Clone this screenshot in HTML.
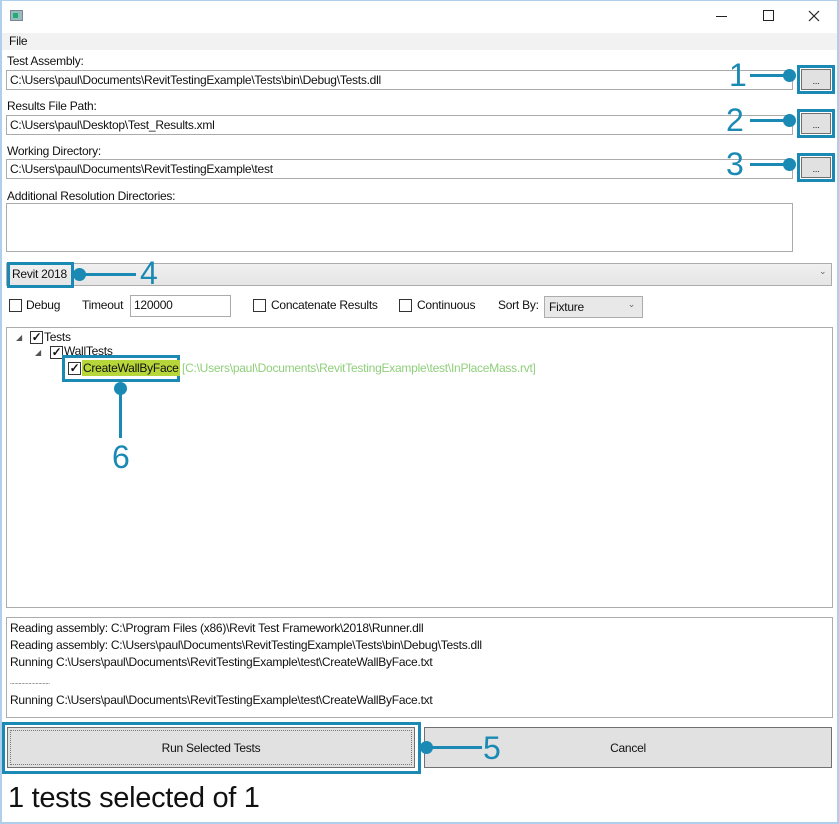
<!DOCTYPE html>
<html><head><meta charset="utf-8"><style>
*{margin:0;padding:0;box-sizing:border-box}
body{width:839px;height:824px;background:#fff;position:relative;overflow:hidden;font-family:"Liberation Sans",sans-serif;font-size:12px;color:#111;letter-spacing:-0.25px}
.a{position:absolute;white-space:nowrap}
.tb{position:absolute;border:1px solid #ababab;background:#fff;padding:2px 3px;line-height:14px}
.btn{position:absolute;border:1px solid #707070;background:#e1e1e1;text-align:center}
.hl{position:absolute;border:3px solid #1a8ab5}
.num{position:absolute;color:#1a8ab5;font-size:32px;line-height:34px;letter-spacing:0;font-family:"Liberation Sans",sans-serif}
.ln{position:absolute;background:#1a8ab5;height:3px}
.dot{position:absolute;width:13px;height:13px;border-radius:50%;background:#1a8ab5}
.cb{position:absolute;width:13px;height:13px;border:1px solid #333;background:#fff}
.ck{position:absolute;width:13px;height:13px;border:1px solid #333;background:#fff;font-size:12px;line-height:11px;text-align:center;font-weight:bold}
</style></head><body>
<div class="a" style="left:0;top:0;width:2px;height:824px;background:#aed0ec"></div>
<div class="a" style="right:0;top:0;width:2px;height:824px;background:#aed0ec"></div>
<div class="a" style="left:0;bottom:0;width:839px;height:2px;background:#aed0ec"></div>
<div class="a" style="left:0;top:0;width:839px;height:1px;background:#aed0ec"></div>
<div class="a" style="left:10px;top:10px;width:13px;height:11px;background:#9bb;border:1px solid #789"><div style="position:absolute;left:2px;top:2px;width:5px;height:5px;background:#2a7"></div></div>
<div class="a" style="left:716px;top:16px;width:11px;height:1px;background:#222"></div>
<div class="a" style="left:763px;top:10px;width:11px;height:11px;border:1px solid #222"></div>
<svg class="a" style="left:808px;top:10px" width="12" height="12"><path d="M1 1L11 11M11 1L1 11" stroke="#222" stroke-width="1.2"/></svg>
<div class="a" style="left:2px;top:33px;width:835px;height:17px;background:#f2f2f2"></div>
<div class="a" style="left:9px;top:34px">File</div>

<div class="a" style="left:7px;top:54px">Test Assembly:</div>
<div class="tb" style="left:6px;top:70px;width:787px;height:20px">C:\Users\paul\Documents\RevitTestingExample\Tests\bin\Debug\Tests.dll</div>
<div class="a" style="left:7px;top:99px">Results File Path:</div>
<div class="tb" style="left:6px;top:115px;width:787px;height:20px">C:\Users\paul\Desktop\Test_Results.xml</div>
<div class="a" style="left:7px;top:144px">Working Directory:</div>
<div class="tb" style="left:6px;top:159px;width:787px;height:20px">C:\Users\paul\Documents\RevitTestingExample\test</div>
<div class="a" style="left:7px;top:189px">Additional Resolution Directories:</div>
<div class="tb" style="left:6px;top:203px;width:787px;height:49px"></div>

<div class="hl" style="left:797px;top:65px;width:38px;height:29px"></div>
<div class="btn" style="left:801px;top:69px;width:30px;height:21px;font-size:9px;line-height:22px">...</div>
<div class="hl" style="left:797px;top:109px;width:38px;height:29px"></div>
<div class="btn" style="left:801px;top:113px;width:30px;height:21px;font-size:9px;line-height:22px">...</div>
<div class="hl" style="left:797px;top:153px;width:38px;height:29px"></div>
<div class="btn" style="left:801px;top:157px;width:30px;height:21px;font-size:9px;line-height:22px">...</div>
<div class="num" style="left:729px;top:58px">1</div><div class="ln" style="left:750px;top:74px;width:40px"></div><div class="dot" style="left:783px;top:69px"></div>
<div class="num" style="left:726px;top:103px">2</div><div class="ln" style="left:750px;top:119px;width:40px"></div><div class="dot" style="left:783px;top:114px"></div>
<div class="num" style="left:726px;top:147px">3</div><div class="ln" style="left:750px;top:163px;width:40px"></div><div class="dot" style="left:783px;top:158px"></div>

<div class="a" style="left:6px;top:263px;width:826px;height:23px;border:1px solid #acacac;background:linear-gradient(#f0f0f0,#e5e5e5)"></div>
<div class="a" style="left:819px;top:266px;font-size:9px;color:#666">⌄</div>
<div class="hl" style="left:7px;top:262px;width:67px;height:26px"></div>
<div class="a" style="left:12px;top:267px">Revit 2018</div>
<div class="dot" style="left:73px;top:268px"></div><div class="ln" style="left:80px;top:273px;width:56px"></div>
<div class="num" style="left:140px;top:256px">4</div>

<div class="cb" style="left:9px;top:299px"></div><div class="a" style="left:26px;top:298px">Debug</div>
<div class="a" style="left:82px;top:298px">Timeout</div>
<div class="tb" style="left:130px;top:295px;width:101px;height:22px">120000</div>
<div class="cb" style="left:253px;top:299px"></div><div class="a" style="left:271px;top:298px">Concatenate Results</div>
<div class="cb" style="left:399px;top:299px"></div><div class="a" style="left:417px;top:298px">Continuous</div>
<div class="a" style="left:498px;top:298px">Sort By:</div>
<div class="a" style="left:544px;top:296px;width:99px;height:22px;border:1px solid #acacac;background:#e8e8e8;padding:3px 4px">Fixture<span style="position:absolute;right:7px;top:2px;font-size:9px;color:#666">⌄</span></div>

<div class="a" style="left:6px;top:327px;width:827px;height:281px;border:1px solid #acacac"></div>
<div class="a" style="left:16px;top:333px;font-size:8px;color:#555">◢</div>
<div class="ck" style="left:30px;top:331px">✓</div><div class="a" style="left:44px;top:330px">Tests</div>
<div class="a" style="left:35px;top:348px;font-size:8px;color:#555">◢</div>
<div class="ck" style="left:50px;top:346px">✓</div><div class="a" style="left:64px;top:344px">WallTests</div>
<div class="hl" style="left:62px;top:355px;width:118px;height:27px"></div>
<div class="ck" style="left:68px;top:362px">✓</div>
<div class="a" style="left:82px;top:360px;background:#b7d63a;padding:0 1px;line-height:16px">CreateWallByFace</div>
<div class="a" style="left:182px;top:361px;color:#8fcf7a">[C:\Users\paul\Documents\RevitTestingExample\test\InPlaceMass.rvt]</div>
<div class="dot" style="left:114px;top:382px"></div><div class="a" style="left:119px;top:388px;width:3px;height:50px;background:#1a8ab5"></div>
<div class="num" style="left:112px;top:440px">6</div>

<div class="a" style="left:6px;top:617px;width:827px;height:101px;border:1px solid #acacac;overflow:hidden">
<div class="a" style="left:3px;top:2px;line-height:17.2px">Reading assembly: C:\Program Files (x86)\Revit Test Framework\2018\Runner.dll<br>Reading assembly: C:\Users\paul\Documents\RevitTestingExample\Tests\bin\Debug\Tests.dll<br>Running C:\Users\paul\Documents\RevitTestingExample\test\CreateWallByFace.txt<br><span style="font-size:6px">............................</span><br>Running C:\Users\paul\Documents\RevitTestingExample\test\CreateWallByFace.txt<br><span style="font-size:6px">...................................</span></div></div>

<div class="hl" style="left:2px;top:722px;width:419px;height:52px"></div>
<div class="btn" style="left:7px;top:727px;width:408px;height:41px;line-height:40px;outline:1px dotted #777;outline-offset:-4px">Run Selected Tests</div>
<div class="btn" style="left:424px;top:727px;width:408px;height:41px;line-height:40px">Cancel</div>
<div class="dot" style="left:420px;top:741px"></div><div class="ln" style="left:428px;top:746px;width:54px"></div>
<div class="num" style="left:483px;top:731px">5</div>

<div class="a" style="left:8px;top:782px;font-size:29px;letter-spacing:-0.3px">1 tests selected of 1</div>
</body></html>
